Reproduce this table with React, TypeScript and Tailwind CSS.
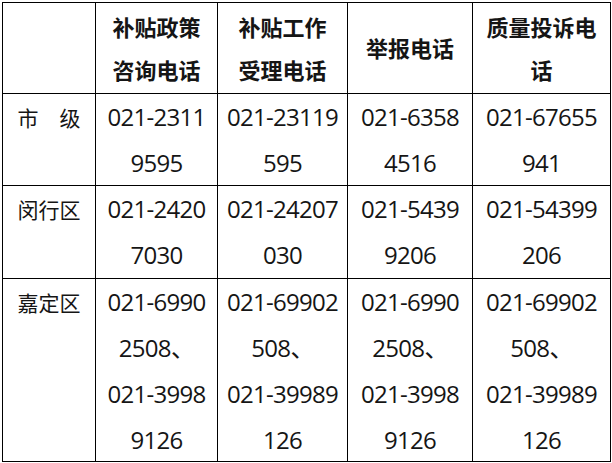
import React from "react";

const headers = [
  ["补贴政策", "咨询电话"],
  ["补贴工作", "受理电话"],
  ["举报电话"],
  ["质量投诉电", "话"],
];

const rows = [
  {
    label: "市　级",
    cells: [
      ["021-2311", "9595"],
      ["021-23119", "595"],
      ["021-6358", "4516"],
      ["021-67655", "941"],
    ],
  },
  {
    label: "闵行区",
    cells: [
      ["021-2420", "7030"],
      ["021-24207", "030"],
      ["021-5439", "9206"],
      ["021-54399", "206"],
    ],
  },
  {
    label: "嘉定区",
    cells: [
      ["021-6990", "2508、", "021-3998", "9126"],
      ["021-69902", "508、", "021-39989", "126"],
      ["021-6990", "2508、", "021-3998", "9126"],
      ["021-69902", "508、", "021-39989", "126"],
    ],
  },
];

const cjk = "font-['Noto_Sans_CJK_SC',sans-serif]";
const num = "font-['Open_Sans','Noto_Sans_CJK_SC',sans-serif]";

const App = () => {
  return (
    <div className="w-[612px] h-[463px] bg-white pl-[2px] pt-[2px] overflow-hidden">
      <div className="inline-grid bg-black p-px gap-px grid-cols-[92px_121px_129px_124px_137px] grid-rows-[90px_91px_92px_182px] text-[#151515]">
        <div className="bg-white" />
        {headers.map((h, i) => (
          <div key={i} className={`bg-white flex flex-col items-center justify-center ${cjk} font-bold text-[22px] leading-[43.5px]`}>
            {h.map((line) => (
              <span key={line}>{line}</span>
            ))}
          </div>
        ))}

        {rows.map((r) => (
          <React.Fragment key={r.label}>
            <div className={`bg-white flex justify-center ${cjk} text-[21px] leading-[46px] whitespace-pre`}>
              {r.label}
            </div>
            {r.cells.map((c, i) => (
              <div key={i} className={`bg-white flex flex-col items-center ${num} text-[24px] tracking-[-0.7px] leading-[46px]`}>
                {c.map((line, j) => (
                  <span key={j}>{line}</span>
                ))}
              </div>
            ))}
          </React.Fragment>
        ))}
      </div>
    </div>
  );
};

export default App;
